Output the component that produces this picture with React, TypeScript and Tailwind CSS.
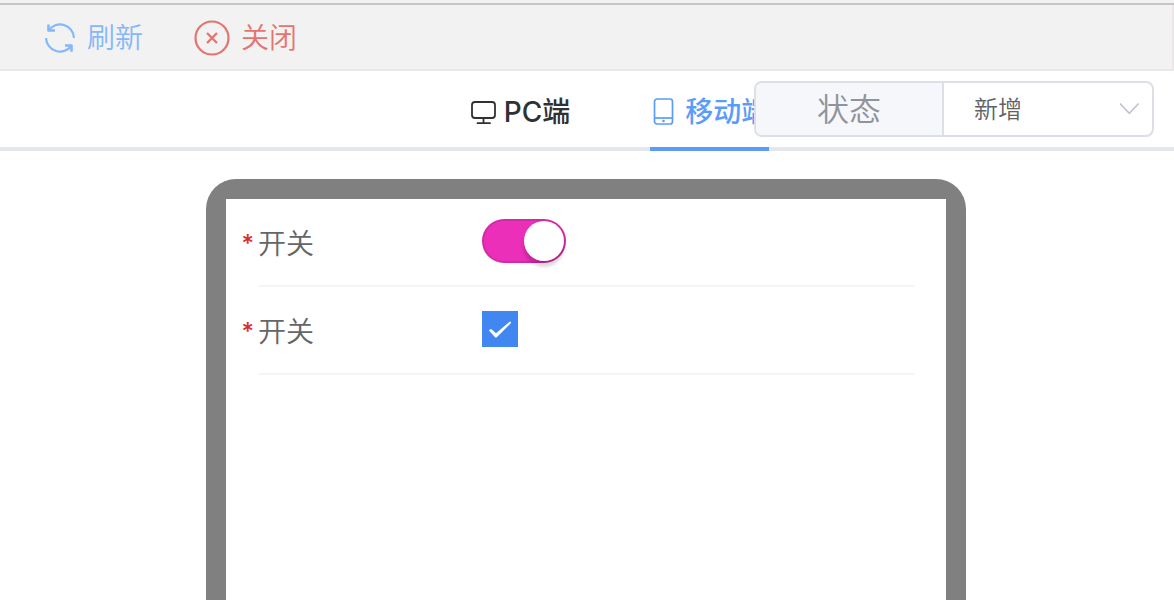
import React, { useState } from 'react';

type Device = 'pc' | 'mobile';

const RefreshIcon = () => (
  <svg className="h-8 w-8" viewBox="0 0 32 32" fill="none" stroke="currentColor" strokeWidth="2.200" strokeLinejoin="round">
    <path d="M4.500 8.500A14 14 0 0 1 30 16" />
    <path d="M4.500 2.500v6H11" strokeWidth="2.600" />
    <path d="M2 16A14 14 0 0 0 27.500 23.500" />
    <path d="M21 23.500H27.500V29.800" strokeWidth="2.600" />
  </svg>
);

const CloseIcon = () => (
  <svg className="h-9 w-9" viewBox="0 0 36 36" fill="none" stroke="currentColor" strokeWidth="2.200">
    <circle cx="18" cy="18" r="16.500" />
    <path d="M13 13l10 10M23 13L13 23" strokeWidth="2.400" />
  </svg>
);

const MonitorIcon = () => (
  <svg className="h-7 w-7" viewBox="0 0 28 28" fill="none" stroke="currentColor" strokeWidth="1.800" strokeLinecap="round">
    <rect x="3" y="4" width="23" height="16" rx="3" />
    <path d="M14.500 20v5M8.500 25.200h12.500" />
  </svg>
);

const PhoneIcon = () => (
  <svg className="h-7 w-7" viewBox="0 0 28 28" fill="none" stroke="currentColor" strokeWidth="1.700">
    <rect x="4.500" y="1" width="18" height="25" rx="2.500" />
    <path d="M4.500 20h18" />
    <circle cx="13.500" cy="23" r="1.300" fill="currentColor" stroke="none" />
  </svg>
);

interface FieldRowProps {
  id: string;
  label: string;
  children: React.ReactNode;
}

const FieldRow: React.FC<FieldRowProps> = ({ id, label, children }) => (
  <div className="mx-8 flex h-22 items-start border-b-2 border-[#f4f4f4]">
    <label htmlFor={id} className="relative w-56 pt-6 text-[28px] leading-[42px] font-[350] text-[#646566]">
      <span className="absolute right-full mr-1 text-2xl leading-[42px] font-medium text-[#dd2b2b]">*</span>
      {label}
    </label>
    {children}
  </div>
);

const App: React.FC = () => {
  const [device, setDevice] = useState<Device>('mobile');
  const [status, setStatus] = useState('add');
  const [enabled, setEnabled] = useState(true);
  const [checked, setChecked] = useState(true);

  const tabClass = (active: boolean) =>
    `-mb-1 flex items-center gap-[7px] border-b-4 pt-1.5 text-[28px] font-medium ${active ? 'border-[#5a9cf8] text-[#5a9cf8]' : 'border-transparent text-[#303133]'}`;

  return (
    <div className="flex h-screen flex-col overflow-hidden bg-white font-['Inter','Noto_Sans_CJK_SC',sans-serif]">
      {/* Toolbar */}
      <header className="flex h-[71px] shrink-0 flex-col bg-[#f2f2f2]">
        <div className="h-[5px] border-b-2 border-[#c6c6c6]"></div>
        <div className="flex flex-1 items-center gap-[51px] border-r-2 border-b-2 border-[#ebe6e8] pt-0.5 pl-11 text-[28px] font-[350]">
          <button className="flex items-center gap-[11px] text-[#85b7fb]">
            <RefreshIcon />
            刷新
          </button>
          <button className="flex items-center gap-[11px] text-[#e57470]">
            <CloseIcon />
            关闭
          </button>
        </div>
      </header>

      {/* Device tabs */}
      <div className="relative flex h-20 shrink-0 justify-center border-b-4 border-[#e4e7ed] pl-16">
        <div role="tablist" className="flex gap-20">
          <button role="tab" aria-selected={device === 'pc'} onClick={() => setDevice('pc')} className={tabClass(device === 'pc')}>
            <MonitorIcon />
            PC端
          </button>
          <button role="tab" aria-selected={device === 'mobile'} onClick={() => setDevice('mobile')} className={tabClass(device === 'mobile')}>
            <PhoneIcon />
            移动端
          </button>
        </div>

        <div className="absolute top-[10px] right-5 flex h-14 w-[400px] overflow-hidden rounded-lg border-2 border-[#dcdfe6] bg-white font-[350]">
          <label htmlFor="status" className="flex w-[188px] items-center justify-center border-r-2 border-[#dcdfe6] bg-[#f5f7fa] pt-0.5 text-[32px] text-[#909399]">
            状态
          </label>
          <div className="relative flex-1">
            <select
              id="status"
              value={status}
              onChange={(e) => setStatus(e.target.value)}
              className="h-full w-full appearance-none pt-0.5 pl-[30px] text-2xl text-[#606266] outline-none"
            >
              <option value="add">新增</option>
              <option value="edit">编辑</option>
            </select>
            <svg className="pointer-events-none absolute top-4 right-3 h-5 w-5" viewBox="0 0 20 20" fill="none" stroke="#c0c4cc" strokeWidth="1.700">
              <path d="M0 4.500l9.300 9.800L18.600 4.500" />
            </svg>
          </div>
        </div>
      </div>

      {/* Phone frame */}
      <div className="mt-7 flex justify-center pr-0.5">
        <main className="h-[1334px] w-[760px] max-w-full shrink-0 rounded-[30px] bg-[#808080] p-5">
          <div className="h-full bg-white">
            <FieldRow id="switch" label="开关">
              <div className="relative mt-5 h-11 w-21">
                <input
                  id="switch"
                  type="checkbox"
                  role="switch"
                  checked={enabled}
                  onChange={(e) => setEnabled(e.target.checked)}
                  className="peer block h-11 w-21 appearance-none rounded-full border-2 border-black/10 bg-white bg-clip-border checked:bg-[#eb2fb9]"
                />
                <span className="pointer-events-none absolute top-[2px] left-[2px] h-10 w-10 rounded-full bg-white shadow-[0_6px_2px_rgba(0,0,0,0.05),0_4px_4px_rgba(0,0,0,0.1),0_6px_6px_rgba(0,0,0,0.05)] peer-checked:left-[42px]"></span>
              </div>
            </FieldRow>

            <FieldRow id="checkbox" label="开关">
              <div className="relative mt-6 h-9 w-9">
                <input
                  id="checkbox"
                  type="checkbox"
                  checked={checked}
                  onChange={(e) => setChecked(e.target.checked)}
                  className="peer block h-9 w-9 appearance-none border-2 border-[#c8c9cc] checked:border-[#4087f2] checked:bg-[#4087f2]"
                />
                <svg className="pointer-events-none absolute inset-0 hidden h-9 w-9 peer-checked:block" viewBox="0 0 36 36" fill="white">
                  <path d="M7 19.500Q8 17.500 9.800 18.500L14 22.200L27.500 10.800Q29.500 10.300 29 12L15 26Q13.900 27 12.800 26Z" />
                </svg>
              </div>
            </FieldRow>
          </div>
        </main>
      </div>
    </div>
  );
};

export default App;
